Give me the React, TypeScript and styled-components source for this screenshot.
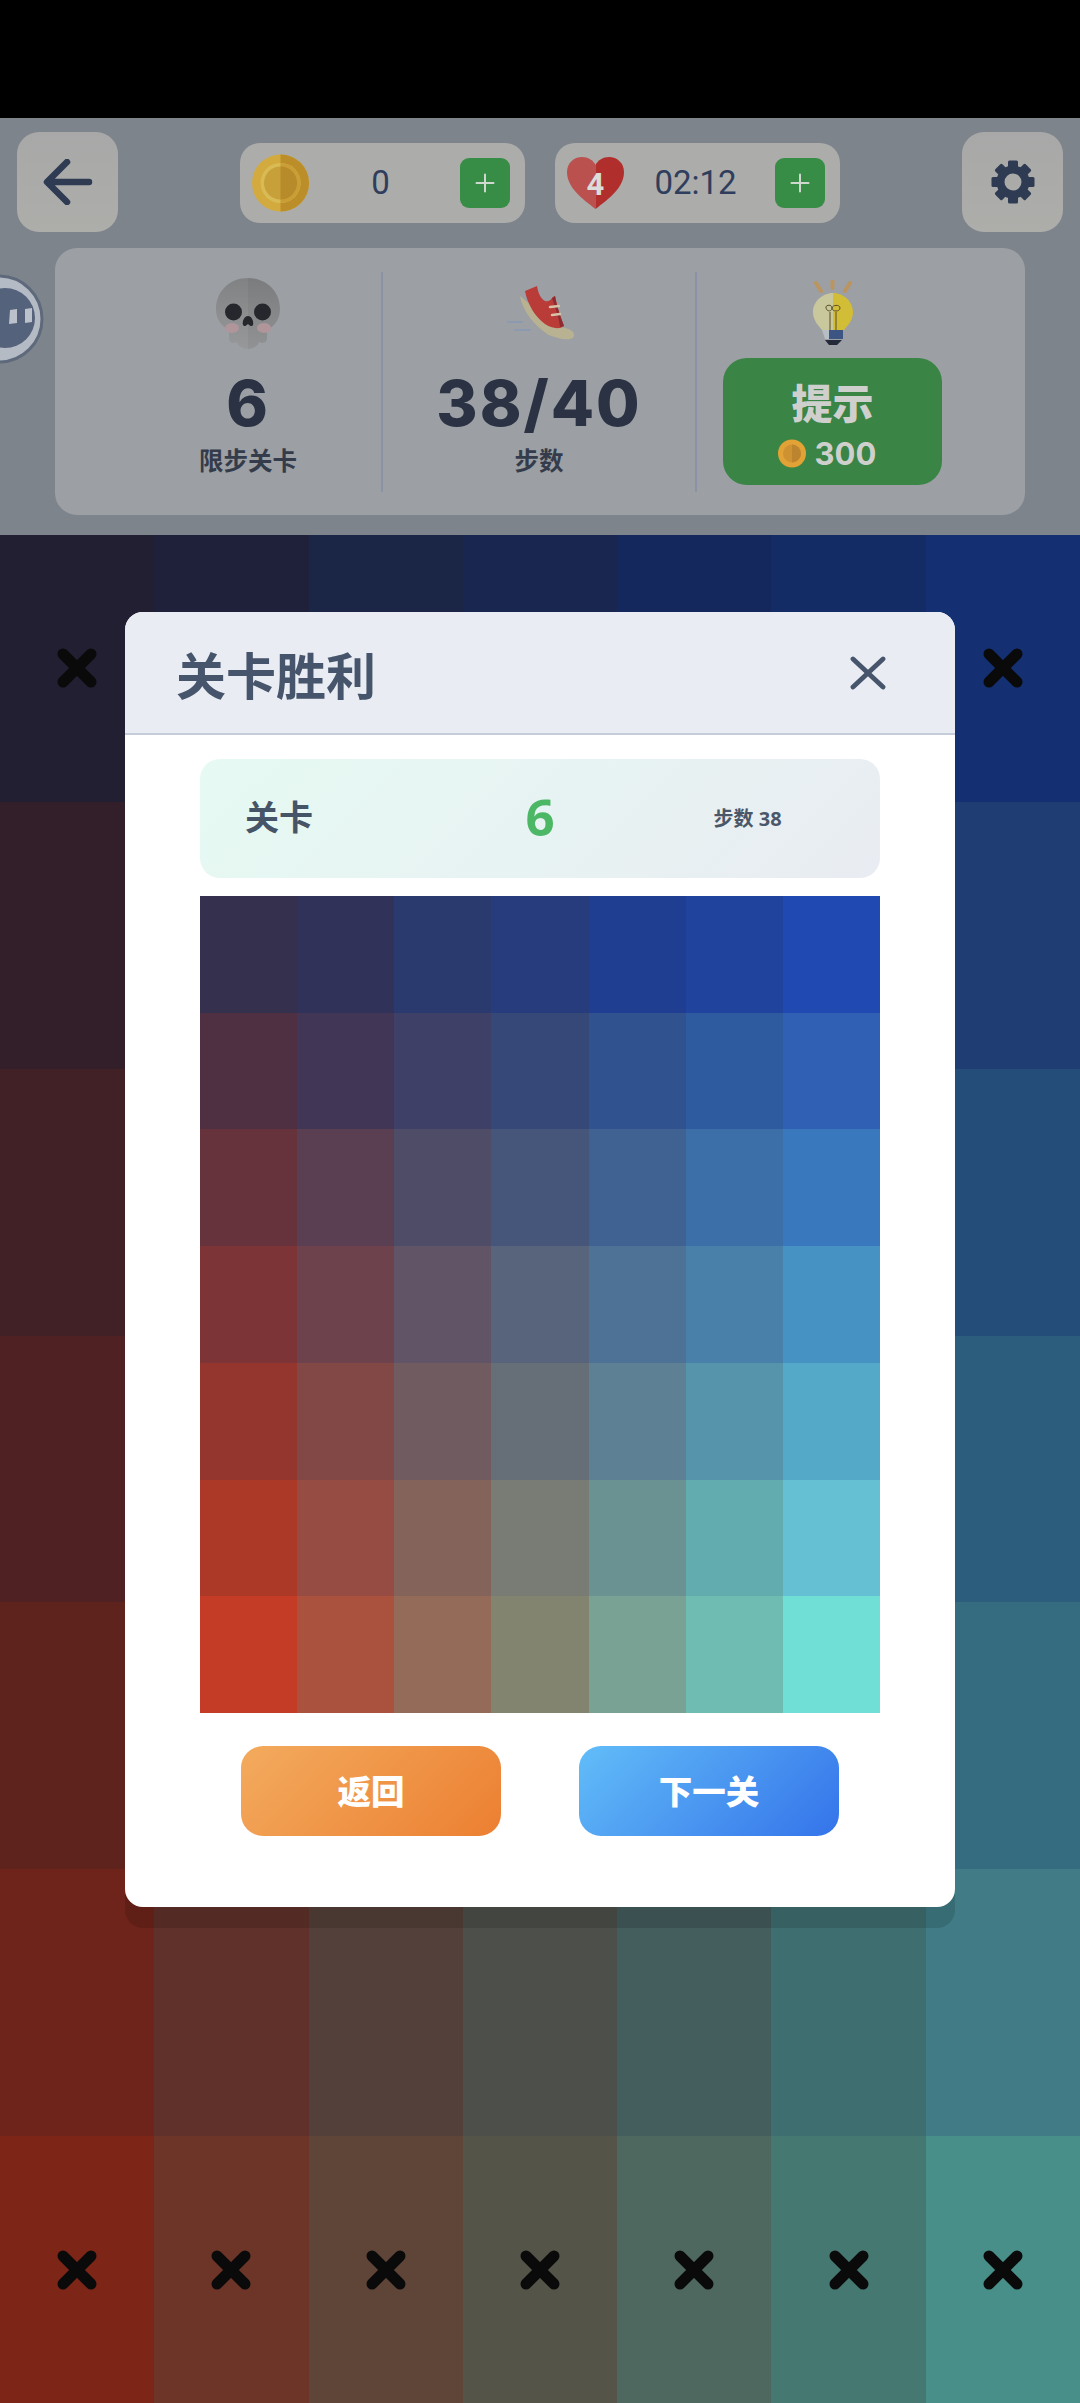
import React from "react";
import styled, { createGlobalStyle } from "styled-components";

const CJK = `"Noto Sans CJK SC", "Noto Sans", sans-serif`;
const LATIN = `Inter, "Noto Sans CJK SC", sans-serif`;

const Global = createGlobalStyle`
  html, body { margin: 0; padding: 0; background: #000; }
  * { box-sizing: border-box; }
`;

const Page = styled.div`
  position: relative;
  width: 1080px;
  height: 2403px;
  overflow: hidden;
  display: flex;
  flex-direction: column;
  background: #000;
  font-family: ${CJK};
`;

const StatusBar = styled.div`
  height: 118px;
  flex: none;
  background: #000;
`;

const Header = styled.header`
  position: relative;
  height: 417px;
  flex: none;
  padding: 14px 17px 0;
  background: #7d848c;
`;

const TopRow = styled.div`
  display: flex;
  align-items: center;
  justify-content: space-between;
  height: 100px;
`;

const SquareButton = styled.div`
  width: 101px;
  height: 100px;
  border-radius: 22px;
  display: flex;
  align-items: center;
  justify-content: center;
  background: linear-gradient(180deg, #a8a8a8, #adadaa);
`;

const Pills = styled.div`
  display: flex;
  gap: 30px;
  margin-top: 2px;
`;

const Pill = styled.div`
  width: 285px;
  height: 80px;
  border-radius: 20px;
  display: grid;
  grid-template-columns: 57px 1fr 50px;
  align-items: center;
  padding: 0 15px 0 12px;
  background: #acacaa;
`;

const PillValue = styled.span`
  padding-right: 8px;
  text-align: center;
  font-family: Roboto, sans-serif;
  font-size: 33px;
  line-height: 40px;
  color: #2f3e5c;
`;

const PlusButton = styled.div`
  width: 50px;
  height: 50px;
  border-radius: 9px;
  display: flex;
  align-items: center;
  justify-content: center;
  background: #388d46;
`;

const StatsPanel = styled.section`
  width: 970px;
  height: 267px;
  margin: 16px 0 0 38px;
  padding: 24px 57px 23px 60px;
  border-radius: 22px;
  display: grid;
  grid-template-columns: 268px 314px 271px;
  background: #9c9fa3;
`;

const StatColumn = styled.div<{ $divided?: boolean }>`
  display: flex;
  flex-direction: column;
  align-items: center;
  border-right: ${(p) => (p.$divided ? "2px solid #8a93a5" : "none")};
`;

const IconSlot = styled.div`
  height: 82px;
  flex: none;
  display: flex;
  align-items: center;
  justify-content: center;
`;

const StatNumber = styled.div`
  margin-top: 11px;
  font-family: ${LATIN};
  font-weight: 800;
  font-size: 63px;
  line-height: 76px;
  letter-spacing: 2px;
  color: #2a3244;
`;

const StatLabel = styled.div`
  margin-top: -1px;
  font-weight: 700;
  font-size: 24.500px;
  line-height: 40px;
  color: #343c4b;
`;

const HintButton = styled.div`
  width: 219px;
  height: 127px;
  margin-top: 4px;
  padding-top: 19px;
  border-radius: 24px;
  display: flex;
  flex-direction: column;
  align-items: center;
  background: #3a8445;
  color: #cfd0cd;
`;

const HintTitle = styled.div`
  font-weight: 900;
  font-size: 41px;
  line-height: 48px;
`;

const HintCost = styled.div`
  display: flex;
  align-items: center;
  gap: 9px;
  height: 44px;
  margin-top: 6px;
  padding-right: 11px;
  font-family: ${LATIN};
  font-weight: 700;
  font-size: 31px;
`;

const FloatingBadge = styled.div`
  position: absolute;
  left: 0;
  top: 156px;
  width: 45px;
  height: 90px;
`;

const Board = styled.main`
  flex: 1;
  display: grid;
  grid-template-columns: repeat(7, 1fr);
  grid-template-rows: repeat(7, 1fr);
`;

const BoardCell = styled.div`
  display: flex;
  align-items: center;
  justify-content: center;
`;

const Dialog = styled.div`
  position: absolute;
  left: 125px;
  top: 612px;
  width: 830px;
  height: 1295px;
  border-radius: 18px;
  background: #fff;
  box-shadow: 0 21px 0 rgba(0, 0, 0, 0.12);
`;

const DialogHeader = styled.div`
  height: 123px;
  padding: 0 69px 0 51px;
  display: flex;
  align-items: center;
  justify-content: space-between;
  border-radius: 18px 18px 0 0;
  border-bottom: 2px solid #c5cddb;
  background: #e9ecf2;
`;

const DialogTitle = styled.h2`
  margin: 0;
  font-weight: 700;
  font-size: 50px;
  line-height: 60px;
  color: #46556b;
`;

const DialogBody = styled.div`
  padding: 24px 75px 0;
`;

const LevelCard = styled.div`
  height: 119px;
  border-radius: 20px;
  display: grid;
  grid-template-columns: repeat(3, 1fr);
  align-items: center;
  background: linear-gradient(135deg, #e6faf3, #e9ecf2);
`;

const LevelLabel = styled.div`
  margin-top: -5px;
  padding-left: 45px;
  font-weight: 700;
  font-size: 34px;
  line-height: 44px;
  color: #465468;
`;

const LevelNumber = styled.div`
  margin-top: -5px;
  text-align: center;
  font-family: "Open Sans", sans-serif;
  font-weight: 700;
  font-size: 51px;
  line-height: 60px;
  color: #4cb866;
`;

const LevelSteps = styled.div`
  padding-right: 38px;
  text-align: center;
  font-family: "Noto Sans", "Noto Sans CJK SC", sans-serif;
  font-weight: 700;
  font-size: 20px;
  line-height: 28px;
  color: #4b5768;
`;

const Palette = styled.div`
  height: 817px;
  margin-top: 18px;
  display: grid;
  grid-template-columns: repeat(7, 1fr);
  grid-template-rows: repeat(7, 1fr);
`;

const ActionRow = styled.div`
  display: flex;
  justify-content: space-between;
  margin-top: 33px;
  padding: 0 41px;
`;

const ActionButton = styled.div<{ $from: string; $to: string }>`
  width: 260px;
  height: 90px;
  padding-bottom: 3px;
  border-radius: 22px;
  display: flex;
  align-items: center;
  justify-content: center;
  font-weight: 900;
  font-size: 33.500px;
  color: #fff;
  background: linear-gradient(135deg, ${(p) => p.$from}, ${(p) => p.$to});
`;

type RGB = [number, number, number];

// Tile colours of the finished puzzle, row by row.
const TILES: RGB[][] = [
  [[53, 48, 78], [48, 50, 90], [42, 58, 110], [38, 60, 125], [32, 62, 145], [32, 68, 158], [32, 74, 178]],
  [[78, 48, 66], [66, 54, 86], [62, 64, 104], [54, 72, 120], [48, 82, 142], [46, 90, 160], [48, 96, 180]],
  [[102, 50, 60], [90, 62, 82], [78, 76, 102], [70, 86, 122], [64, 98, 146], [60, 110, 168], [58, 120, 190]],
  [[124, 52, 54], [110, 66, 76], [96, 84, 102], [88, 100, 124], [78, 114, 150], [72, 128, 170], [70, 146, 194]],
  [[148, 54, 46], [130, 72, 70], [112, 92, 96], [102, 110, 120], [94, 128, 148], [86, 148, 172], [84, 168, 200]],
  [[172, 56, 40], [150, 76, 66], [132, 100, 90], [120, 124, 116], [106, 146, 146], [98, 172, 176], [100, 192, 210]],
  [[196, 60, 38], [170, 82, 62], [148, 107, 88], [131, 132, 112], [122, 162, 148], [110, 188, 178], [112, 224, 214]],
];

const tileColor = (row: number, col: number, dim = 1) => {
  const [r, g, b] = TILES[row][col];
  return `rgb(${Math.round(r * dim)}, ${Math.round(g * dim)}, ${Math.round(b * dim)})`;
};

const INDEXES = [0, 1, 2, 3, 4, 5, 6];

const ArrowIcon = () => (
  <svg width="50" height="46" viewBox="0 0 50 46" fill="none" stroke="#2e3b52" strokeWidth="6.500" strokeLinecap="round" strokeLinejoin="round">
    <path d="M46 23H5M24 3 4 23l20 20" />
  </svg>
);

const GearIcon = () => (
  <svg width="44" height="44" viewBox="0 0 44 44">
    <g fill="#2e3b52">
      {[0, 45, 90, 135, 180, 225, 270, 315].map((a) => (
        <rect key={a} x="17" y="0.5" width="10" height="10" rx="1.5" transform={`rotate(${a} 22 22)`} />
      ))}
    </g>
    <circle cx="22" cy="22" r="12.5" fill="none" stroke="#2e3b52" strokeWidth="8" />
  </svg>
);

const PlusIcon = () => (
  <svg width="20" height="20" viewBox="0 0 20 20" stroke="#cfd8cf" strokeWidth="2" strokeLinecap="round">
    <path d="M10 1.500v17M1.500 10h17" />
  </svg>
);

const CoinIcon = () => (
  <svg width="57" height="58" viewBox="0 0 57 58">
    <circle cx="28.5" cy="29" r="28.5" fill="#d2aa3e" />
    <path d="M28.5 .5a28.5 28.5 0 0 1 0 57z" fill="#bb8e2a" />
    <circle cx="28.5" cy="29" r="20" fill="#d9bb55" />
    <path d="M28.5 9a20 20 0 0 1 0 40z" fill="#c99e36" />
    <circle cx="28.5" cy="29" r="16.500" fill="#c7a03a" />
    <path d="M28.5 12.500a16.500 16.500 0 0 1 0 33z" fill="#b78a2a" />
  </svg>
);

const SmallCoin = () => (
  <svg width="28" height="29" viewBox="0 0 28 29">
    <circle cx="14" cy="14.5" r="14" fill="#e2a236" />
    <circle cx="14" cy="14.5" r="9" fill="#cf9232" />
    <path d="M14 5.5a9 9 0 0 1 0 18z" fill="#bd8430" />
  </svg>
);

const HeartIcon = () => (
  <svg width="57" height="52" viewBox="0 0 57 52">
    <path d="M28.5 52C14 41 0 30 0 15 0 6 7 0 15 0c6 0 11 3 13.5 8z" fill="#bb514f" />
    <path d="M28.5 52C43 41 57 30 57 15 57 6 50 0 42 0c-6 0-11 3-13.5 8z" fill="#b02f2c" />
    <text x="28.5" y="38" textAnchor="middle" fontFamily="Roboto, sans-serif" fontWeight="700" fontSize="31" fill="#dcdcda">4</text>
  </svg>
);

const SkullIcon = () => (
  <svg width="66" height="72" viewBox="0 0 66 72">
    <defs>
      <linearGradient id="skullHead" x1="0" y1="0" x2="0" y2="1">
        <stop offset="0" stopColor="#808284" />
        <stop offset="1" stopColor="#97989a" />
      </linearGradient>
    </defs>
    <path d="M33 1C15 1 1 14 1 32c0 10 5 17 13 21v9c0 4 5 5 8 3 1 4 6 7 11 7s10-3 11-7c3 2 8 1 8-3v-9c8-4 13-11 13-21C65 14 51 1 33 1z" fill="url(#skullHead)" />
    <path d="M33 1c18 0 32 13 32 31 0 10-5 17-13 21v9c0 4-5 5-8 3-1 4-6 7-11 7z" fill="#000" opacity=".04" />
    <ellipse cx="17" cy="51" rx="7" ry="5" fill="#b0959b" />
    <ellipse cx="49" cy="51" rx="7" ry="5" fill="#b0959b" />
    <circle cx="18.500" cy="35" r="8.500" fill="#25272c" />
    <circle cx="47.500" cy="35" r="8.500" fill="#25272c" />
    <path d="M33 39c-4 0-6 6-5 9 1 2 3 1 5-1 2 2 4 3 5 1 1-3-1-9-5-9z" fill="#25272c" />
  </svg>
);

const ShoeIcon = () => (
  <svg width="68" height="56" viewBox="0 0 68 56">
    <path d="M0 37h15M8 45h15" stroke="#8b9ab0" strokeWidth="2.200" strokeLinecap="round" />
    <path d="M13 11C15 25 27 40 40 49c8 4 18 6 23 5 4-1 5-4 3-7-4-4-11-5-16-5z" fill="#b9b292" />
    <path d="M18 6 30 1c1 7 4 13 8 15 3 1 6-1 7-3l3-2c2 11 6 22 9 30-5 4-13 2-19-2C28 32 20 18 18 6z" fill="#b93c38" />
    <path d="M45 13l3-2c2 11 6 22 9 30l-4 1c-1-10-5-20-8-29z" fill="#8e2b30" />
    <path d="M43 22l9-1M45 30l8-1" stroke="#d6c3a8" strokeWidth="2.500" strokeLinecap="round" />
  </svg>
);

const ShoeWrap = styled.div`
  display: flex;
  margin-left: 4px;
`;

const BulbIcon = () => (
  <svg width="42" height="66" viewBox="0 0 42 66">
    <path d="M20.500 0v8M4 3l5 8M38 3l-5 8" stroke="#bb9560" strokeWidth="4" strokeLinecap="round" />
    <path d="M21 13C10 13 1 22 1 32c0 9 6 14 9 18h11z" fill="#c9c79c" />
    <path d="M21 13c11 0 20 9 20 19 0 9-6 14-9 18H21z" fill="#d2bd36" />
    <path d="M17 50h14v9H17z" fill="#3d5583" />
    <path d="M10 50h7v9h-4z" fill="#b7bdc4" />
    <path d="M13 60h17l-5 5h-8z" fill="#232a3a" />
    <path d="M18 50V32M24 50V32M14 27c0 5 6 5 6 1s-6-3-6-1zM20 28c0 4 8 4 8 0s-8-3-8 0z" fill="none" stroke="#5a4f27" strokeWidth="1" />
  </svg>
);

const BadgeFace = () => (
  <svg width="45" height="90" viewBox="0 0 45 90">
    <circle cx="-1" cy="45" r="43" fill="#b4bbc5" stroke="#5e6a7b" strokeWidth="3" />
    <circle cx="5" cy="44" r="30" fill="#55627b" />
    <path d="M10 36l7-1v14l-8 1zM25 35l7-1v14l-7 1z" fill="#bcc2cc" />
  </svg>
);

const CrossMark = () => (
  <svg width="40" height="40" viewBox="0 0 40 40" stroke="#0a0a0a" strokeWidth="11" strokeLinecap="round">
    <path d="M6 6l28 28M34 6 6 34" />
  </svg>
);

const CloseIcon = () => (
  <svg width="36" height="34" viewBox="0 0 36 34" stroke="#46556b" strokeWidth="4.800" strokeLinecap="round">
    <path d="M3 3l30 28M33 3 3 31" />
  </svg>
);

export default function App() {
  return (
    <Page>
      <Global />
      <StatusBar />
      <Header>
        <TopRow>
          <SquareButton><ArrowIcon /></SquareButton>
          <Pills>
            <Pill>
              <CoinIcon />
              <PillValue>0</PillValue>
              <PlusButton><PlusIcon /></PlusButton>
            </Pill>
            <Pill>
              <HeartIcon />
              <PillValue>02:12</PillValue>
              <PlusButton><PlusIcon /></PlusButton>
            </Pill>
          </Pills>
          <SquareButton><GearIcon /></SquareButton>
        </TopRow>
        <StatsPanel>
          <StatColumn $divided>
            <IconSlot><SkullIcon /></IconSlot>
            <StatNumber>6</StatNumber>
            <StatLabel>限步关卡</StatLabel>
          </StatColumn>
          <StatColumn $divided>
            <IconSlot>
              <ShoeWrap><ShoeIcon /></ShoeWrap>
            </IconSlot>
            <StatNumber>38/40</StatNumber>
            <StatLabel>步数</StatLabel>
          </StatColumn>
          <StatColumn>
            <IconSlot><BulbIcon /></IconSlot>
            <HintButton>
              <HintTitle>提示</HintTitle>
              <HintCost><SmallCoin />300</HintCost>
            </HintButton>
          </StatColumn>
        </StatsPanel>
        <FloatingBadge><BadgeFace /></FloatingBadge>
      </Header>
      <Board>
        {INDEXES.map((r) =>
          INDEXES.map((c) => (
            <BoardCell key={`${r}-${c}`} style={{ background: tileColor(r, c, 0.64) }}>
              {(r === 0 || r === 6) && <CrossMark />}
            </BoardCell>
          ))
        )}
      </Board>
      <Dialog>
        <DialogHeader>
          <DialogTitle>关卡胜利</DialogTitle>
          <CloseIcon />
        </DialogHeader>
        <DialogBody>
          <LevelCard>
            <LevelLabel>关卡</LevelLabel>
            <LevelNumber>6</LevelNumber>
            <LevelSteps>步数 38</LevelSteps>
          </LevelCard>
          <Palette>
            {INDEXES.map((r) =>
              INDEXES.map((c) => <div key={`${r}-${c}`} style={{ background: tileColor(r, c) }} />)
            )}
          </Palette>
          <ActionRow>
            <ActionButton $from="#f3ab5e" $to="#ec7f31">返回</ActionButton>
            <ActionButton $from="#62bdf8" $to="#3473ea">下一关</ActionButton>
          </ActionRow>
        </DialogBody>
      </Dialog>
    </Page>
  );
}
